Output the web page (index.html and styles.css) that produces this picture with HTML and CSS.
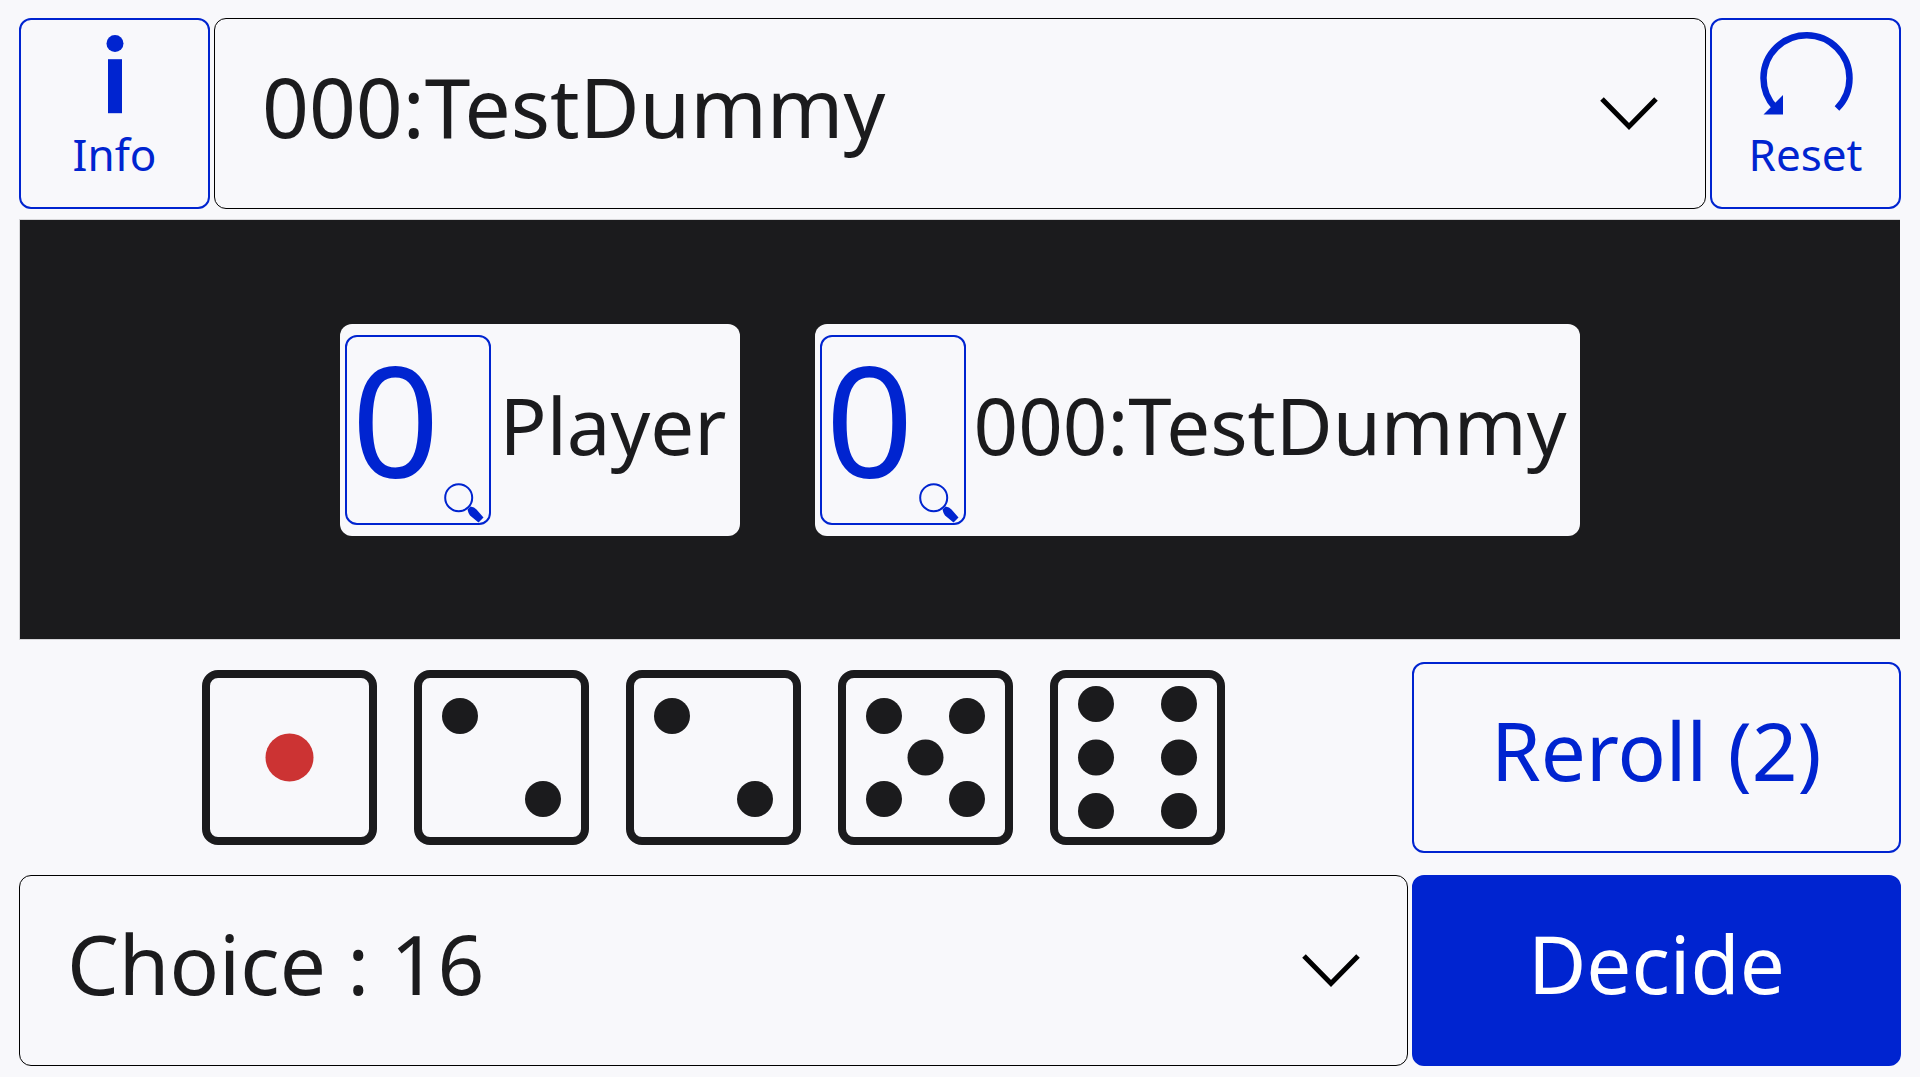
FILE: index.html
```html
<!DOCTYPE html>
<html lang="en">
<head>
<meta charset="utf-8">
<meta name="viewport" content="width=device-width, initial-scale=1">
<title>Dice</title>
<link rel="stylesheet" href="styles.css">
</head>
<body>
<main class="game">
  <header class="bar bar-top">
    <button type="button" class="button icon-button">
      <svg class="button-icon" viewBox="0 0 96 88" aria-hidden="true"><circle cx="48" cy="15.5" r="8.5"/><rect x="41" y="31.2" width="14" height="54"/></svg>
      <span class="icon-label">Info</span>
    </button>
    <div class="picker">
      <select class="picker-select" aria-label="Opponent"><option>000:TestDummy</option></select>
      <svg class="chevron" viewBox="0 0 60 36" aria-hidden="true"><path d="M3 3 30 30.5 57 3"/></svg>
    </div>
    <button type="button" class="button icon-button">
      <svg class="button-icon" viewBox="0 0 96 88" aria-hidden="true"><path class="arc" d="M79 80.500A43 43 0 1 0 17.500 80"/><path d="M5.500 86.500H25V67Z"/></svg>
      <span class="icon-label">Reset</span>
    </button>
  </header>

  <section class="board" aria-label="Scores">
    <div class="player">
      <button type="button" class="button score">
        <span class="score-value">0</span>
        <svg class="lens" viewBox="0 0 42 42" aria-hidden="true"><circle cx="15.700" cy="16.700" r="13.500"/><path d="M24.500 28.500 27.500 25.500Q31.500 26.200 33.500 28.500L40.500 36.500 35.500 41.500 27 34.500Q25.200 32 24.500 28.500Z"/></svg>
      </button>
      <span class="player-name">Player</span>
    </div>
    <div class="player">
      <button type="button" class="button score">
        <span class="score-value">0</span>
        <svg class="lens" viewBox="0 0 42 42" aria-hidden="true"><circle cx="15.700" cy="16.700" r="13.500"/><path d="M24.500 28.500 27.500 25.500Q31.500 26.200 33.500 28.500L40.500 36.500 35.500 41.500 27 34.500Q25.200 32 24.500 28.500Z"/></svg>
      </button>
      <span class="player-name">000:TestDummy</span>
    </div>
  </section>

  <section class="bar bar-action">
    <div class="dice">
      <svg class="die" viewBox="0 0 175 175" role="img" aria-label="1"><rect x="4" y="4" width="167" height="167" rx="12"/><circle class="ace" cx="87.500" cy="87.500" r="24"/></svg>
      <svg class="die" viewBox="0 0 175 175" role="img" aria-label="2"><rect x="4" y="4" width="167" height="167" rx="12"/><circle cx="46" cy="46" r="18"/><circle cx="129" cy="129" r="18"/></svg>
      <svg class="die" viewBox="0 0 175 175" role="img" aria-label="2"><rect x="4" y="4" width="167" height="167" rx="12"/><circle cx="46" cy="46" r="18"/><circle cx="129" cy="129" r="18"/></svg>
      <svg class="die" viewBox="0 0 175 175" role="img" aria-label="5"><rect x="4" y="4" width="167" height="167" rx="12"/><circle cx="46" cy="46" r="18"/><circle cx="129" cy="46" r="18"/><circle cx="87.500" cy="87.500" r="18"/><circle cx="46" cy="129" r="18"/><circle cx="129" cy="129" r="18"/></svg>
      <svg class="die" viewBox="0 0 175 175" role="img" aria-label="6"><rect x="4" y="4" width="167" height="167" rx="12"/><circle cx="46" cy="34" r="18"/><circle cx="129" cy="34" r="18"/><circle cx="46" cy="87.500" r="18"/><circle cx="129" cy="87.500" r="18"/><circle cx="46" cy="141" r="18"/><circle cx="129" cy="141" r="18"/></svg>
    </div>
    <button type="button" class="button text-button">Reroll (2)</button>
  </section>

  <section class="bar bar-action">
    <div class="picker">
      <select class="picker-select" aria-label="Category"><option>Choice : 16</option></select>
      <svg class="chevron" viewBox="0 0 60 36" aria-hidden="true"><path d="M3 3 30 30.5 57 3"/></svg>
    </div>
    <button type="button" class="button text-button primary">Decide</button>
  </section>
</main>
</body>
</html>
```

FILE: styles.css
```css
:root {
  --paper: #f8f8fb;
  --ink: #1b1b1d;
  --blue: #0024d0;
}

* {
  box-sizing: border-box;
}

body {
  margin: 0;
  background: var(--paper);
  color: var(--ink);
  font-family: "Noto Sans", "DejaVu Sans", sans-serif;
}

.game {
  display: flex;
  flex-direction: column;
  min-height: 100vh;
  padding: 18px 19px 11px;
}

.bar {
  display: grid;
  gap: 4px;
  min-height: 191px;
}

.bar-top {
  grid-template-columns: 191px 1fr 191px;
}

.bar-action {
  grid-template-columns: 1fr 26%;
  margin-top: 22px;
}

.button {
  border: 2px solid var(--blue);
  border-radius: 12px;
  background: var(--paper);
  color: var(--blue);
  font-family: inherit;
  cursor: pointer;
}

.icon-button {
  display: flex;
  flex-direction: column;
  align-items: center;
  justify-content: flex-start;
  gap: 10px;
  padding: 8px 0 0;
}

.button-icon {
  width: 96px;
  height: 88px;
  fill: var(--blue);
}

.arc {
  fill: none;
  stroke: var(--blue);
  stroke-width: 6.5;
}

.icon-label {
  font-size: 44px;
  line-height: 56px;
}

.text-button {
  padding: 0 0 16px;
  font-size: 80px;
  line-height: 1;
}

.primary {
  background: var(--blue);
  color: #fff;
}

.picker {
  display: grid;
}

.picker-select,
.chevron {
  grid-area: 1 / 1;
}

.picker-select {
  appearance: none;
  width: 100%;
  padding: 0 120px 16px 47px;
  border: 1px solid #000;
  border-radius: 12px;
  background: var(--paper);
  color: var(--ink);
  font-family: inherit;
  font-size: 82px;
}

.chevron {
  place-self: center end;
  width: 60px;
  height: 36px;
  margin-right: 47px;
  fill: none;
  stroke: #000;
  stroke-width: 5;
  pointer-events: none;
}

.board {
  display: flex;
  flex: 1;
  flex-wrap: wrap;
  align-items: center;
  justify-content: center;
  gap: 75px;
  margin-top: 10px;
  margin-right: 1px;
  border: solid #d6d6d9;
  border-width: 1px 0 1px 1px;
  background: var(--ink);
}

.player {
  display: flex;
  align-items: center;
  padding: 11px 13px 11px 5px;
  border-radius: 12px;
  background: var(--paper);
}

.player-name {
  padding: 0 0 10px 8px;
  font-size: 78px;
  line-height: 96px;
}

.score {
  display: flex;
  align-items: flex-end;
  justify-content: space-between;
  width: 146px;
  height: 190px;
  padding: 0 4px 0 4px;
}

.score-value {
  padding-bottom: 26px;
  font-size: 154px;
  line-height: 160px;
}

.lens {
  flex: none;
  width: 42px;
  height: 42px;
  fill: var(--blue);
}

.lens circle {
  fill: none;
  stroke: var(--blue);
  stroke-width: 2;
}

.dice {
  display: flex;
  align-items: center;
  justify-content: center;
  gap: 37px;
}

.die {
  width: 175px;
  height: 175px;
  fill: var(--ink);
}

.die rect {
  fill: none;
  stroke: var(--ink);
  stroke-width: 8;
}

.die .ace {
  fill: #cc3333;
}
```
